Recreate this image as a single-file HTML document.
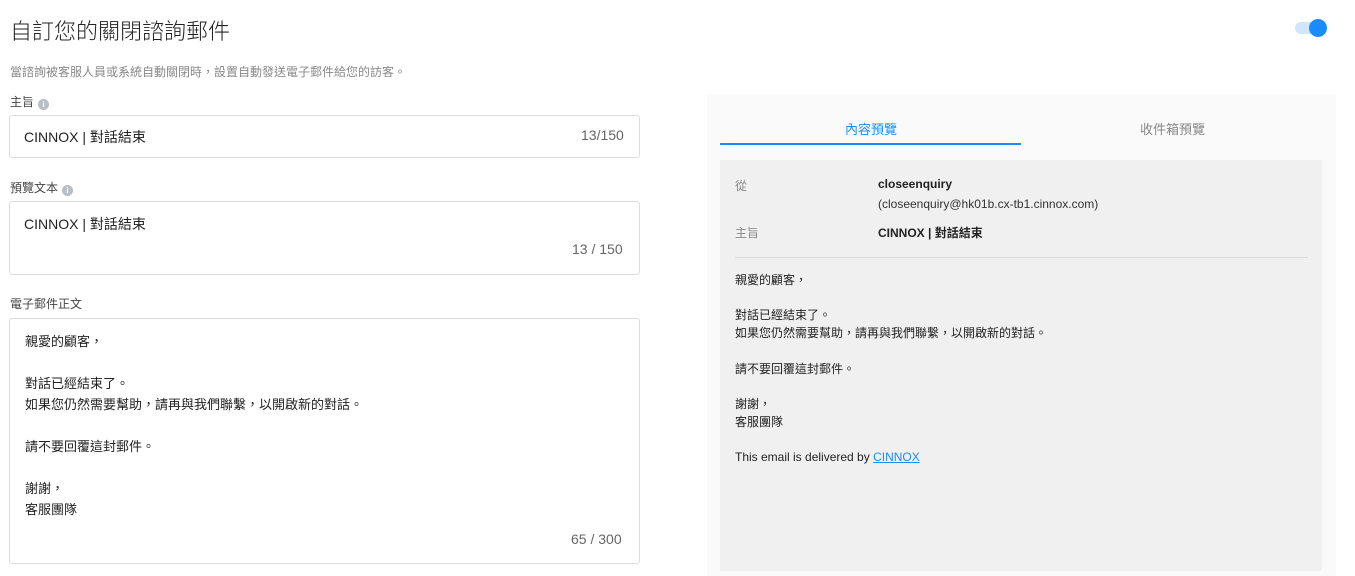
<!DOCTYPE html>
<html><head><meta charset="utf-8"><style>
*{margin:0;padding:0;box-sizing:border-box}
body{width:1355px;height:576px;background:#fff;font-family:"Liberation Sans","Noto Sans CJK TC",sans-serif;position:relative;overflow:hidden;color:#222}
.a{position:absolute;white-space:nowrap}
.box{position:absolute;left:9px;width:631px;border:1px solid #ddd;border-radius:3px;background:#fff}
.lbl{font-size:12px;color:#444}
.i{display:inline-block;width:11px;height:11px;border-radius:50%;background:#b8bfc4;color:#fff;font-size:8px;text-align:center;line-height:11px;vertical-align:-1px;margin-left:4px;font-weight:bold}
.cnt{font-size:14px;color:#666}
.t{font-size:14px;color:#222}
.p{font-size:12px;color:#222;line-height:17.7px}
</style></head><body>
<div class="a" style="left:10px;top:14px;font-size:22px;color:#222;font-weight:300">自訂您的關閉諮詢郵件</div>
<div class="a" style="left:1295px;top:22px;width:28px;height:12px;border-radius:6px;background:#cfe6fd"></div>
<div class="a" style="left:1309px;top:19px;width:18px;height:18px;border-radius:50%;background:#1a8cff"></div>
<div class="a" style="left:10px;top:63px;font-size:12px;color:#888">當諮詢被客服人員或系統自動關閉時，設置自動發送電子郵件給您的訪客。</div>
<div class="a lbl" style="left:10px;top:93px">主旨<span class="i">i</span></div>
<div class="box" style="top:115px;height:43px"></div>
<div class="a t" style="left:24px;top:127px">CINNOX | 對話結束</div>
<div class="a cnt" style="left:581px;top:127px">13/150</div>
<div class="a lbl" style="left:10px;top:179px">預覽文本<span class="i">i</span></div>
<div class="box" style="top:201px;height:74px"></div>
<div class="a t" style="left:24px;top:214px">CINNOX | 對話結束</div>
<div class="a cnt" style="left:572px;top:241px">13 / 150</div>
<div class="a lbl" style="left:10px;top:295px">電子郵件正文</div>
<div class="box" style="top:318px;height:246px"></div>
<div class="a" style="left:25px;top:331px;font-size:13px;line-height:21px;color:#222">親愛的顧客，<br><br>對話已經結束了。<br>如果您仍然需要幫助，請再與我們聯繫，以開啟新的對話。<br><br>請不要回覆這封郵件。<br><br>謝謝，<br>客服團隊</div>
<div class="a cnt" style="left:571px;top:531px">65 / 300</div>

<div class="a" style="left:707px;top:94px;width:629px;height:482px;background:#fafafa"></div>
<div class="a" style="left:845px;top:119px;font-size:13px;color:#1a8cff">內容預覽</div>
<div class="a" style="left:1140px;top:119px;font-size:13px;color:#888">收件箱預覽</div>
<div class="a" style="left:720px;top:143px;width:301px;height:2px;background:#1a8cff"></div>
<div class="a" style="left:720px;top:160px;width:602px;height:411px;background:#f0f0f0"></div>
<div class="a" style="left:735px;top:177px;font-size:12px;color:#888">從</div>
<div class="a" style="left:878px;top:177px;font-size:12px;color:#222;font-weight:bold">closeenquiry</div>
<div class="a" style="left:878px;top:197px;font-size:12px;color:#333">(closeenquiry@hk01b.cx-tb1.cinnox.com)</div>
<div class="a" style="left:735px;top:224px;font-size:12px;color:#888">主旨</div>
<div class="a" style="left:878px;top:224px;font-size:12px;color:#222;font-weight:bold">CINNOX | 對話結束</div>
<div class="a" style="left:735px;top:257px;width:573px;height:1px;background:#ddd"></div>
<div class="a p" style="left:735px;top:272px">親愛的顧客，<br><br>對話已經結束了。<br>如果您仍然需要幫助，請再與我們聯繫，以開啟新的對話。<br><br>請不要回覆這封郵件。<br><br>謝謝，<br>客服團隊<br><br>This email is delivered by <span style="color:#1a8cff;text-decoration:underline">CINNOX</span></div>
</body></html>
